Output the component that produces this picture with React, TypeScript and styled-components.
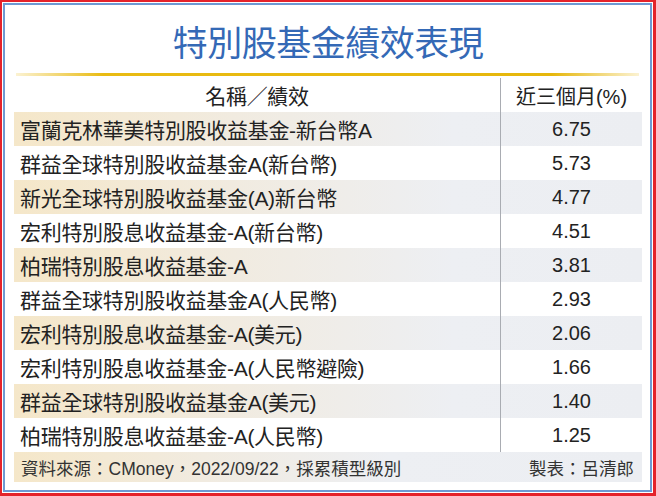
import React from 'react';
import styled, { createGlobalStyle } from 'styled-components';

interface Fund {
  name: string;
  value: string;
}

const funds: Fund[] = [
  { name: '富蘭克林華美特別股收益基金-新台幣A', value: '6.75' },
  { name: '群益全球特別股收益基金A(新台幣)', value: '5.73' },
  { name: '新光全球特別股收益基金(A)新台幣', value: '4.77' },
  { name: '宏利特別股息收益基金-A(新台幣)', value: '4.51' },
  { name: '柏瑞特別股息收益基金-A', value: '3.81' },
  { name: '群益全球特別股收益基金A(人民幣)', value: '2.93' },
  { name: '宏利特別股息收益基金-A(美元)', value: '2.06' },
  { name: '宏利特別股息收益基金-A(人民幣避險)', value: '1.66' },
  { name: '群益全球特別股收益基金A(美元)', value: '1.40' },
  { name: '柏瑞特別股息收益基金-A(人民幣)', value: '1.25' },
];

export default function App() {
  return (
    <>
      <GlobalStyle />
      <Frame>
        <Panel>
          <Title>特別股基金績效表現</Title>
          <GoldRule />
          <Table>
            <HeaderRow>
              <NameCell center>名稱／績效</NameCell>
              <ValueCell>近三個月(%)</ValueCell>
            </HeaderRow>
            {funds.map((f, i) => (
              <Row key={f.name} striped={i % 2 === 0}>
                <NameCell>{f.name}</NameCell>
                <ValueCell>{f.value}</ValueCell>
              </Row>
            ))}
            <Footer>
              <span>資料來源：CMoney，2022/09/22，採累積型級別</span>
              <span>製表：呂清郎</span>
            </Footer>
          </Table>
        </Panel>
      </Frame>
    </>
  );
}

const GlobalStyle = createGlobalStyle`
  html, body {
    margin: 0;
    padding: 0;
    background: #fff;
  }
  body {
    font-family: "Liberation Sans", "Noto Sans CJK TC", sans-serif;
    color: #222;
  }
`;

const Frame = styled.div`
  width: 656px;
  height: 496px;
  box-sizing: border-box;
  border: 2px solid #e4232b;
  border-right-width: 3px;
  border-bottom-width: 3px;
  padding: 1px;
  background: #fff;
`;

const Panel = styled.div`
  height: 100%;
  box-sizing: border-box;
  border: 2px solid #6d9ad3;
  padding: 0 8px 0 9px;
  display: flex;
  flex-direction: column;
`;

const Title = styled.h1`
  margin: 0;
  height: 68px;
  display: flex;
  align-items: center;
  justify-content: center;
  padding-top: 2px;
  box-sizing: border-box;
  font-family: "Noto Sans CJK TC", sans-serif;
  font-size: 35px;
  font-weight: 400;
  color: #3469b6;
  letter-spacing: -0.5px;
`;

const GoldRule = styled.div`
  height: 3px;
  margin: 0 3px 2px 2px;
  background: linear-gradient(
    90deg,
    #fbf2d2 0%,
    #e9bb12 14%,
    #e6b70c 86%,
    #fbf2d2 100%
  );
`;

const Table = styled.div`
  display: flex;
  flex-direction: column;
`;

const Row = styled.div<{ striped?: boolean }>`
  display: grid;
  grid-template-columns: 486px 1fr;
  height: 34px;
  align-items: stretch;
  background: ${({ striped }) =>
    striped
      ? 'linear-gradient(90deg, #f5e7c9 0%, #f1ebe0 35%, #edeff3 70%, #eceef2 100%)'
      : '#fff'};
`;

const HeaderRow = styled(Row)`
  height: 34px;
`;

const NameCell = styled.div<{ center?: boolean }>`
  display: flex;
  align-items: center;
  justify-content: ${({ center }) => (center ? 'center' : 'flex-start')};
  padding-left: ${({ center }) => (center ? '0' : '6px')};
  font-size: 21px;
  white-space: nowrap;
  letter-spacing: -0.3px;
`;

const ValueCell = styled.div`
  display: flex;
  align-items: center;
  justify-content: center;
  border-left: 1px solid #a9acb2;
  font-size: 20px;
  white-space: nowrap;
`;

const Footer = styled.div`
  height: 30px;
  display: flex;
  align-items: center;
  justify-content: space-between;
  padding: 0 8px 0 7px;
  font-size: 17.5px;
  color: #333;
  background: linear-gradient(90deg, #f5e7c9 0%, #f1ebe0 30%, #edeff3 60%, #eceef2 100%);
`;
